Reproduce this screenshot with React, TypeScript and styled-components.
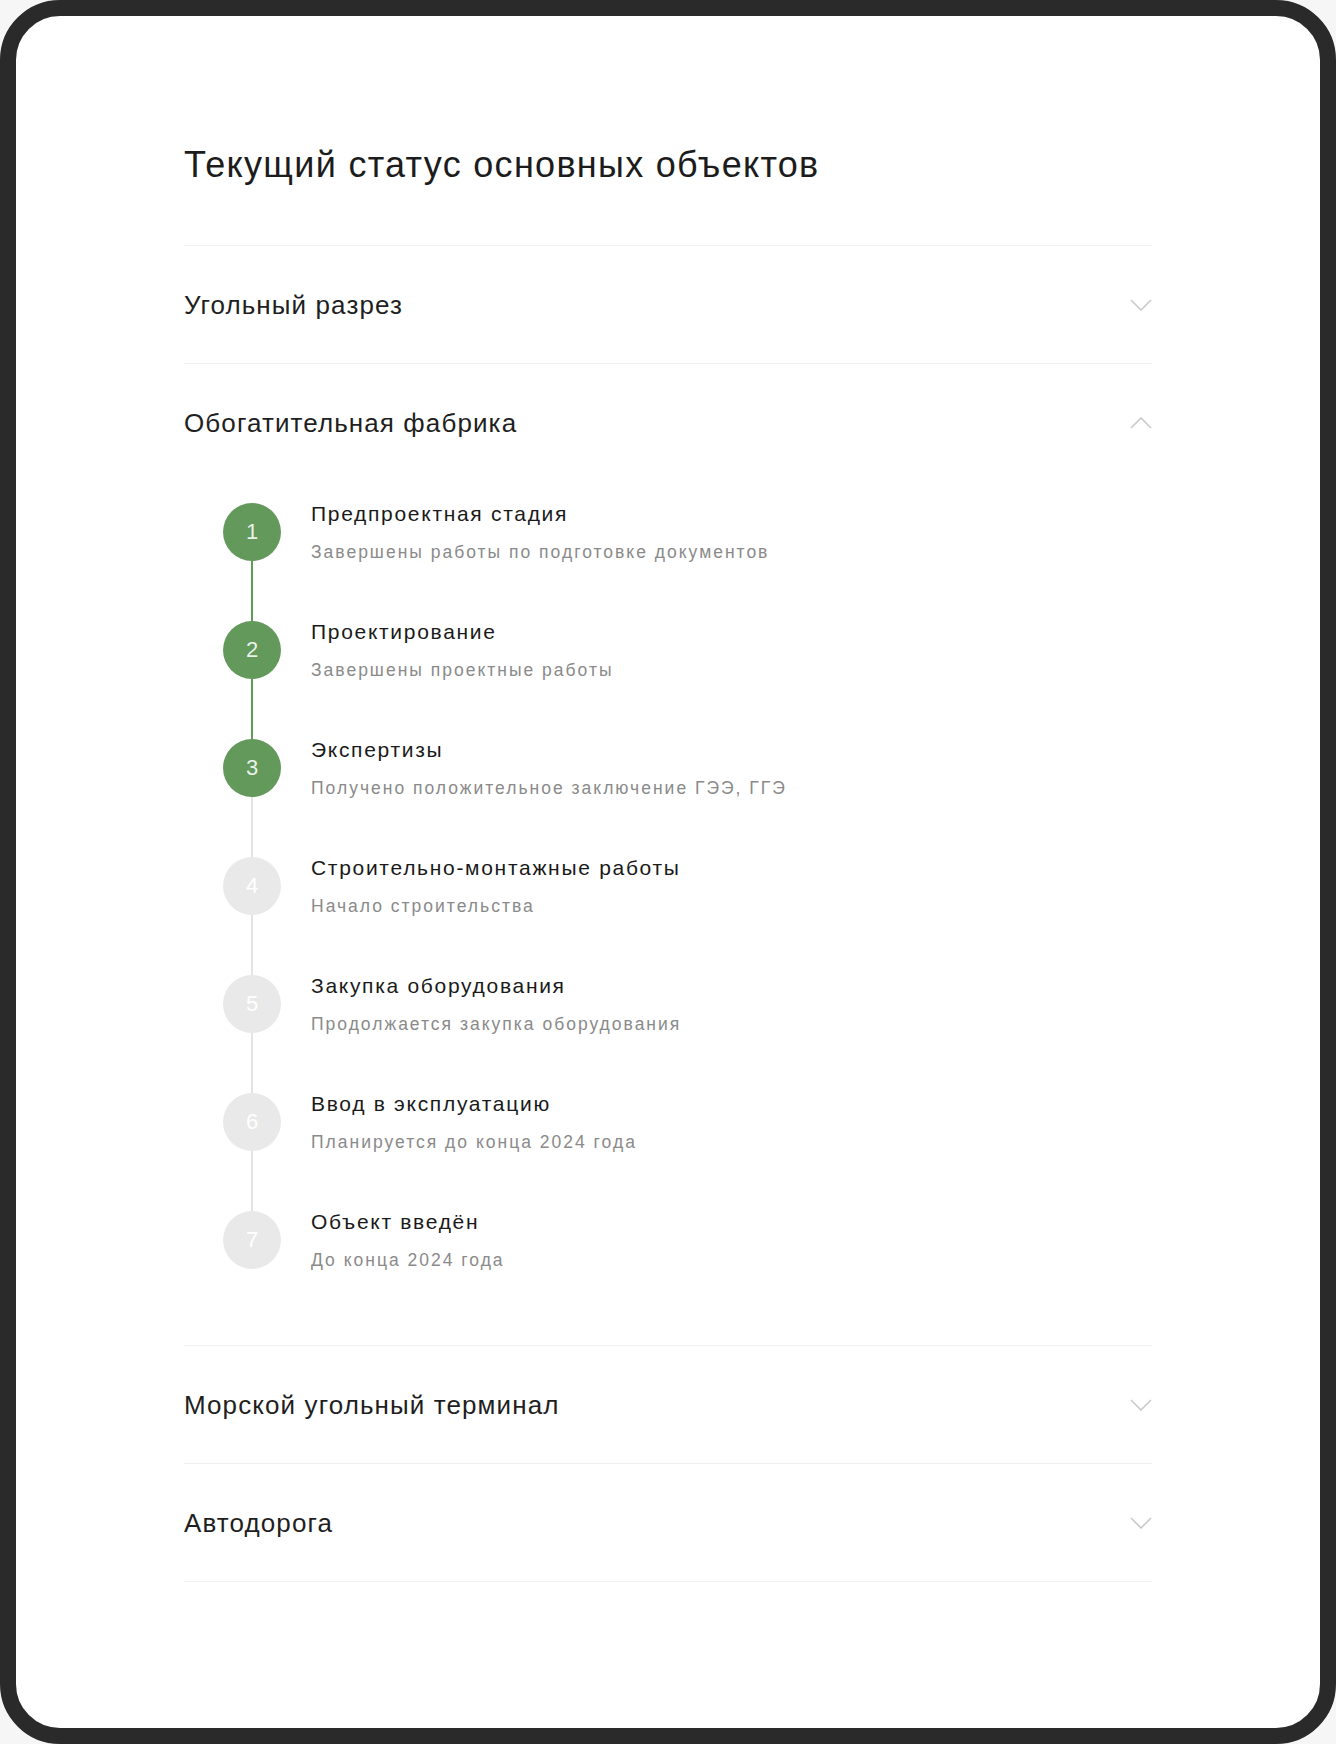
import React from "react";
import styled, { createGlobalStyle } from "styled-components";

const GlobalStyle = createGlobalStyle`
  *, *::before, *::after { box-sizing: border-box; }
  html, body { margin: 0; padding: 0; background: #f6f6f6; }
  body { font-family: "Liberation Sans", Arial, sans-serif; -webkit-font-smoothing: antialiased; }
`;

const Frame = styled.div`
  width: 1336px;
  height: 1744px;
  border: 16px solid #2a2a2a;
  border-radius: 60px;
  background: #ffffff;
  padding: 127px 168px 0;
  overflow: hidden;
`;

const Title = styled.h1`
  margin: 0 0 58px;
  font-size: 36px;
  line-height: 44px;
  font-weight: 400;
  letter-spacing: 1.3px;
  color: #1c1c1c;
`;

const List = styled.div`
  border-bottom: 1px solid #f0f0f0;
`;

const Item = styled.section`
  border-top: 1px solid #f0f0f0;
`;

const Header = styled.div`
  height: 117px;
  display: flex;
  align-items: center;
  justify-content: space-between;
`;

const Label = styled.span`
  font-size: 26px;
  line-height: 30px;
  letter-spacing: 1.1px;
  color: #1f1f1f;
`;

const Chevron = styled.svg<{ $open?: boolean }>`
  width: 22px;
  height: 12px;
  flex: none;
  transform: ${(p) => (p.$open ? "rotate(180deg)" : "none")};
`;

const Steps = styled.ol`
  list-style: none;
  margin: 0;
  padding: 22px 0 16px 39px;
`;

const Step = styled.li<{ $line?: "done" | "todo" | "none" }>`
  position: relative;
  height: 118px;
  display: grid;
  grid-template-columns: 58px 1fr;
  column-gap: 30px;
  align-items: start;

  &::after {
    content: "";
    display: ${(p) => (p.$line === "none" ? "none" : "block")};
    position: absolute;
    left: 28px;
    top: 58px;
    width: 2px;
    height: 60px;
    background: ${(p) => (p.$line === "done" ? "#63995b" : "#e4e4e4")};
  }
`;

const Marker = styled.div<{ $done?: boolean }>`
  width: 58px;
  height: 58px;
  border-radius: 50%;
  background: ${(p) => (p.$done ? "#63995b" : "#e9e9e9")};
  color: ${(p) => (p.$done ? "rgba(255,255,255,0.88)" : "#ffffff")};
  display: flex;
  align-items: center;
  justify-content: center;
  font-size: 22px;
  line-height: 1;
`;

const StepText = styled.div`
  display: flex;
  flex-direction: column;
`;

const StepTitle = styled.div`
  font-size: 21px;
  line-height: 22px;
  letter-spacing: 1.7px;
  color: #1a1a1a;
`;

const StepSub = styled.div`
  margin-top: 16px;
  font-size: 17.5px;
  line-height: 22px;
  letter-spacing: 2px;
  color: #8a8a8a;
`;

const ChevronIcon = ({ open }: { open?: boolean }) => (
  <Chevron $open={open} viewBox="0 0 22 12" fill="none">
    <path d="M1 1 L11 11 L21 1" stroke="#c9c9c9" strokeWidth="1.6" />
  </Chevron>
);

const steps = [
  { t: "Предпроектная стадия", s: "Завершены работы по подготовке документов" },
  { t: "Проектирование", s: "Завершены проектные работы" },
  { t: "Экспертизы", s: "Получено положительное заключение ГЭЭ, ГГЭ" },
  { t: "Строительно-монтажные работы", s: "Начало строительства" },
  { t: "Закупка оборудования", s: "Продолжается закупка оборудования" },
  { t: "Ввод в эксплуатацию", s: "Планируется до конца 2024 года" },
  { t: "Объект введён", s: "До конца 2024 года" },
];
const doneCount = 3;

export default function App() {
  return (
    <>
      <GlobalStyle />
      <Frame>
        <Title>Текущий статус основных объектов</Title>
        <List>
          <Item>
            <Header>
              <Label>Угольный разрез</Label>
              <ChevronIcon />
            </Header>
          </Item>
          <Item>
            <Header>
              <Label>Обогатительная фабрика</Label>
              <ChevronIcon open />
            </Header>
            <Steps>
              {steps.map((st, i) => {
                const line =
                  i === steps.length - 1 ? "none" : i + 1 < doneCount ? "done" : "todo";
                return (
                  <Step key={i} $line={line}>
                    <Marker $done={i < doneCount}>{i + 1}</Marker>
                    <StepText>
                      <StepTitle>{st.t}</StepTitle>
                      <StepSub>{st.s}</StepSub>
                    </StepText>
                  </Step>
                );
              })}
            </Steps>
          </Item>
          <Item>
            <Header>
              <Label>Морской угольный терминал</Label>
              <ChevronIcon />
            </Header>
          </Item>
          <Item>
            <Header>
              <Label>Автодорога</Label>
              <ChevronIcon />
            </Header>
          </Item>
        </List>
      </Frame>
    </>
  );
}
